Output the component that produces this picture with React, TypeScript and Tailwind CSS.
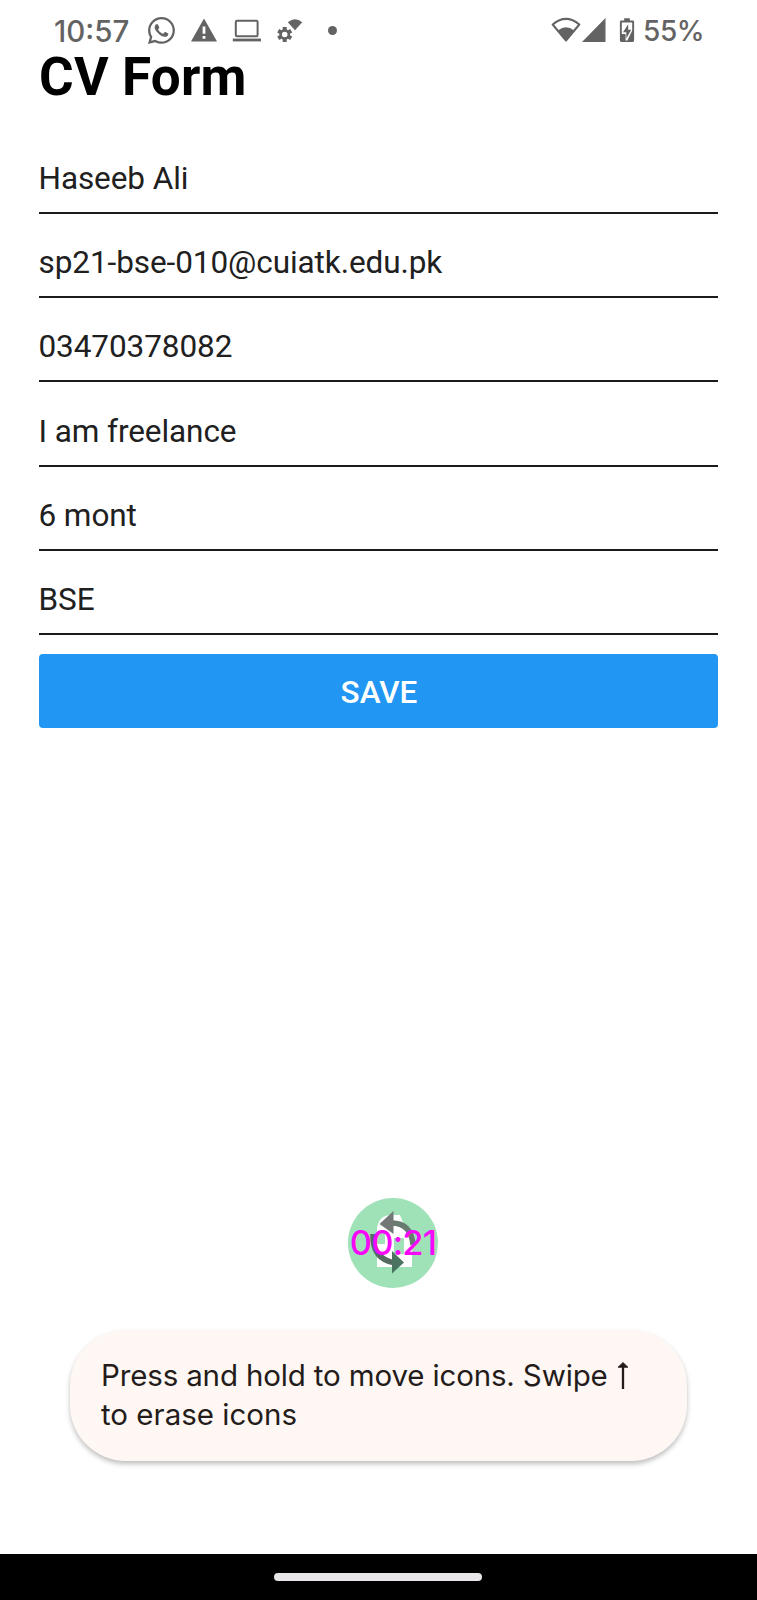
import { BsWhatsapp } from 'react-icons/bs';

const fields = [
  'Haseeb Ali',
  'sp21-bse-010@cuiatk.edu.pk',
  '03470378082',
  'I am freelance',
  '6 mont',
  'BSE',
];

function WarningIcon() {
  return (
    <svg className="ml-[15px] h-[30px] w-[28px]" viewBox="0 0 28 30" fill="#636363">
      <path fillRule="evenodd" d="M14 2.5 27 25.5H1ZM12.6 10.5v7.2h2.8v-7.2ZM12.6 20v2.8h2.8V20Z" />
    </svg>
  );
}

function LaptopIcon() {
  return (
    <svg className="ml-[14px] h-[30px] w-[30px]" viewBox="0 0 30 30" fill="#636363">
      <rect x="3.8" y="4.8" width="21.8" height="15.4" rx="1.2" fill="none" stroke="#636363" strokeWidth="2" />
      <rect x="0.8" y="22.6" width="28.2" height="2.8" />
    </svg>
  );
}

function GearWifiIcon() {
  return (
    <svg className="ml-[13px] h-[30px] w-[28px]" viewBox="0 0 28 30" fill="#636363">
      <path d="M12.8 6.2Q20.2.2 27.2 6.2L20 14.2Z" />
      <circle cx="9.7" cy="18.5" r="4.1" fill="none" stroke="#636363" strokeWidth="2.6" />
      <g stroke="#636363" strokeWidth="4">
        <path d="M9.7 11v3M9.7 23v3M3.2 14.75l2.6 1.5M13.6 20.75l2.6 1.5M3.2 22.25l2.6-1.5M13.6 16.25l2.6-1.5" />
      </g>
    </svg>
  );
}

function WifiIcon() {
  return (
    <svg className="h-[30px] w-[30px]" viewBox="0 0 30 30" fill="#636363">
      <path d="M1.7 8.5Q15-2.7 28.3 8.5L15 24.5Z" fill="none" stroke="#636363" strokeWidth="2" strokeLinejoin="round" />
      <path d="M7 14.6Q15 8 23 14.6L15 25Z" />
    </svg>
  );
}

function BatteryIcon() {
  return (
    <svg className="ml-[13px] h-[30px] w-[16px]" viewBox="0 0 16 30">
      <path d="M5.2 2.2h5.6v2.4h3.1q1.2 0 1.2 1.2v18.8q0 1.4-1.2 1.4H2.1Q.9 26 .9 24.6V5.8q0-1.2 1.2-1.2h3.1Z" fill="#636363" />
      <path d="M2.8 6.6h10.4v7.9L8.4 24.4H6.6V18H2.8Z" fill="#fff" />
      <path d="M9.2 8.2 4 16.2h3.3v6.4L12.2 13.8H9.2Z" fill="#636363" />
    </svg>
  );
}

function RotateIcon() {
  return (
    <svg className="absolute inset-0 h-full w-full" viewBox="0 0 90 90">
      <circle cx="45" cy="45" r="45" fill="#9fe2b8" />
      <path d="M29 30Q31 17 44 17h8l4 10 8 8v34H29V46h8V34h-8Z" fill="#fff" />
      <rect x="46" y="40" width="10" height="16" fill="#9fe2b8" />
      <path d="M42 25Q63 24 65 47" fill="none" stroke="#697b70" strokeWidth="5.5" />
      <path d="M31.5 26 45.5 13v23Z" fill="#737776" />
      <path d="M25 36Q24 61 47 65" fill="none" stroke="#566b60" strokeWidth="5.5" />
      <path d="M56 64.5 44 53v22.5Z" fill="#4b7460" />
    </svg>
  );
}

function UpArrow() {
  return (
    <svg className="ml-[9px] inline-block h-[29px] w-[12px] align-[-4px]" viewBox="0 0 12 29" fill="none" stroke="#241c1a">
      <path d="M6 3v25" strokeWidth="2.3" />
      <path d="M1.2 6.2 6 1.6l4.8 4.6Z" fill="#241c1a" strokeWidth="1" />
    </svg>
  );
}

export default function App() {
  return (
    <div className="flex h-[1600px] w-[757px] flex-col overflow-hidden bg-white font-['Roboto',sans-serif]">
      <header className="flex h-[46px] shrink-0 items-start pt-4 pr-[54px] pl-[54px] font-['Inter',sans-serif] text-[28px] leading-[30px] font-medium text-[#636363]">
        <span className="w-[94px] text-[29.5px] whitespace-nowrap">10:57</span>
        <span className="flex h-[29px] items-center">
          <BsWhatsapp size={27} color="#636363" />
        </span>
        <WarningIcon />
        <LaptopIcon />
        <GearWifiIcon />
        <span className="mt-[10px] ml-[25px] size-[9px] rounded-full bg-[#636363]" />
        <div className="ml-auto flex">
          <WifiIcon />
          <svg className="ml-px h-[30px] w-[24px]" viewBox="0 0 24 30">
            <path d="M0 26 23.5 2V26Z" fill="#636363" />
          </svg>
          <BatteryIcon />
          <span className="ml-2 w-[60px] tracking-[-0.4px] whitespace-nowrap">55%</span>
        </div>
      </header>

      <main className="flex flex-1 flex-col px-[39px]">
        <h1 className="h-[84px] text-[53px] leading-[62px] font-bold tracking-[0.2px] text-black">CV Form</h1>
        <form className="flex flex-col">
          {fields.map((value) => (
            <div key={value} className="flex h-[84.15px] flex-col justify-end border-b-2 border-[#1b1b1b] pb-[13px]">
              <span className="-ml-[0.5px] text-[31.5px] leading-[40px] tracking-[-0.08px] text-[#202020]">{value}</span>
            </div>
          ))}
          <button
            type="button"
            className="mt-[19px] h-[74px] rounded-[4px] bg-[#2196f3] pt-[3px] pl-px text-[31.5px] leading-none font-medium text-white"
          >
            SAVE
          </button>
        </form>

        <div className="relative mt-[470px] ml-[309px] flex size-[90px] items-center justify-center">
          <RotateIcon />
          <span className="relative font-['Inter',sans-serif] text-[34.5px] leading-none font-medium tracking-[-0.8px] whitespace-nowrap text-[#f808f8]">
            00:21
          </span>
        </div>

        <div className="mt-[42px] ml-[31px] h-[131px] w-[617px] rounded-[56px] bg-[#fef7f4] pt-[26px] pl-[31px] font-['Inter',sans-serif] text-[29.5px] leading-[39.5px] text-[#241c1a] shadow-[0_3px_5px_rgba(0,0,0,0.25)]">
          <p className="h-[39.5px] tracking-[-0.15px] whitespace-nowrap">
            Press and hold to move icons. Swipe
            <UpArrow />
          </p>
          <p>to erase icons</p>
        </div>
      </main>

      <footer className="flex h-[46px] shrink-0 items-center justify-center bg-black pr-px">
        <div className="h-[8px] w-[208px] rounded-full bg-[#e8e6e8]" />
      </footer>
    </div>
  );
}
